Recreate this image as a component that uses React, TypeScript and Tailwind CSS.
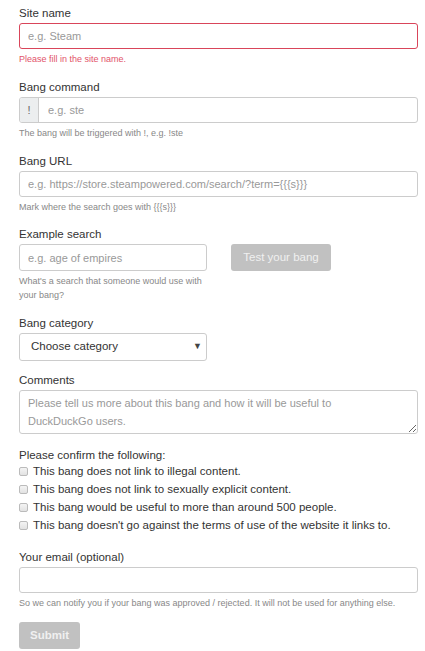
import { useState } from 'react';

const checks = [
  'This bang does not link to illegal content.',
  'This bang does not link to sexually explicit content.',
  'This bang would be useful to more than around 500 people.',
  "This bang doesn't go against the terms of use of the website it links to.",
];

function Label({ children }: { children: React.ReactNode }) {
  return <label className="block text-[11.5px] leading-[16px] text-[#333] mb-[2px]">{children}</label>;
}

function Help({ children, className = '' }: { children: React.ReactNode; className?: string }) {
  return <p className={`text-[9px] leading-[14px] text-[#888] mt-[3px] ${className}`}>{children}</p>;
}

const inputCls =
  'block w-full h-[26px] rounded-[3px] border border-[#ccc] bg-white px-[8px] text-[11px] text-[#333] placeholder:text-[#999] outline-none';

export default function App() {
  const [checked, setChecked] = useState<boolean[]>([false, false, false, false]);

  return (
    <form
      className="w-[425px] bg-white pl-[19px] pr-[7px] pt-[5px] pb-[3px]"
      style={{ fontFamily: '"Liberation Sans", Arial, sans-serif' }}
    >
      <div>
        <Label>Site name</Label>
        <input className={`${inputCls} border-[#d9455a]`} placeholder="e.g. Steam" />
        <p className="text-[9px] leading-[14px] text-[#e2536a] mt-[3px]">Please fill in the site name.</p>
      </div>

      <div className="mt-[13px]">
        <Label>Bang command</Label>
        <div className="flex h-[26px] rounded-[3px] border border-[#ccc] overflow-hidden">
          <span className="w-[19px] flex items-center justify-center bg-[#eceeef] border-r border-[#ccc] text-[11px] text-[#666]">
            !
          </span>
          <input className="flex-1 px-[9px] text-[11px] text-[#333] placeholder:text-[#999] outline-none" placeholder="e.g. ste" />
        </div>
        <Help>The bang will be triggered with !, e.g. !ste</Help>
      </div>

      <div className="mt-[13px]">
        <Label>Bang URL</Label>
        <input className={inputCls} placeholder="e.g. https://store.steampowered.com/search/?term={{{s}}}" />
        <Help>Mark where the search goes with {'{{{s}}}'}</Help>
      </div>

      <div className="mt-[12px]">
        <Label>Example search</Label>
        <div className="flex items-start gap-[24px]">
          <div className="w-[188px]">
            <input className={`${inputCls} h-[27px]`} placeholder="e.g. age of empires" />
            <Help className="leading-[13.3px]">What's a search that someone would use with your bang?</Help>
          </div>
          <button
            type="button"
            disabled
            className="h-[27px] w-[100px] rounded-[3px] bg-[#c1c1c1] text-[11.5px] text-[#f0f0f0]"
          >
            Test your bang
          </button>
        </div>
      </div>

      <div className="mt-[13px]">
        <Label>Bang category</Label>
        <div className="relative w-[188px]">
          <select className="block w-full h-[28px] appearance-none rounded-[3px] border border-[#ccc] bg-white pl-[11px] text-[11.5px] text-[#333] outline-none">
            <option>Choose category</option>
          </select>
          <span className="pointer-events-none absolute right-[5px] top-[9px] text-[9px] leading-none text-[#444]">▼</span>
        </div>
      </div>

      <div className="mt-[11px]">
        <Label>Comments</Label>
        <textarea
          className="block w-full h-[44px] rounded-[3px] border border-[#ccc] pl-[8px] pr-[30px] py-[3px] text-[11px] leading-[18px] text-[#333] placeholder:text-[#999] outline-none"
          placeholder="Please tell us more about this bang and how it will be useful to DuckDuckGo users."
        />
      </div>

      <div className="mt-[13px]">
        <p className="text-[11.5px] leading-[16px] text-[#333]">Please confirm the following:</p>
        <div className="flex flex-col">
          {checks.map((c, i) => (
            <label key={c} className="flex items-center gap-[5px] h-[17.8px] text-[11.5px] text-[#333]">
              <input
                type="checkbox"
                checked={checked[i]}
                onChange={() => setChecked(checked.map((v, j) => (j === i ? !v : v)))}
                className="appearance-none w-[9px] h-[9px] m-0 rounded-[2px] border border-[#bbb] bg-gradient-to-b from-[#f4f4f4] to-[#e2e2e2] checked:bg-[#4a90e2]"
              />
              {c}
            </label>
          ))}
        </div>
      </div>

      <div className="mt-[15px]">
        <Label>Your email (optional)</Label>
        <input className={inputCls} />
        <Help>So we can notify you if your bang was approved / rejected. It will not be used for anything else.</Help>
      </div>

      <button
        type="button"
        disabled
        className="mt-[12px] h-[27px] w-[61px] rounded-[3px] bg-[#c1c1c1] text-[11.5px] font-bold text-[#f0f0f0]"
      >
        Submit
      </button>
    </form>
  );
}
